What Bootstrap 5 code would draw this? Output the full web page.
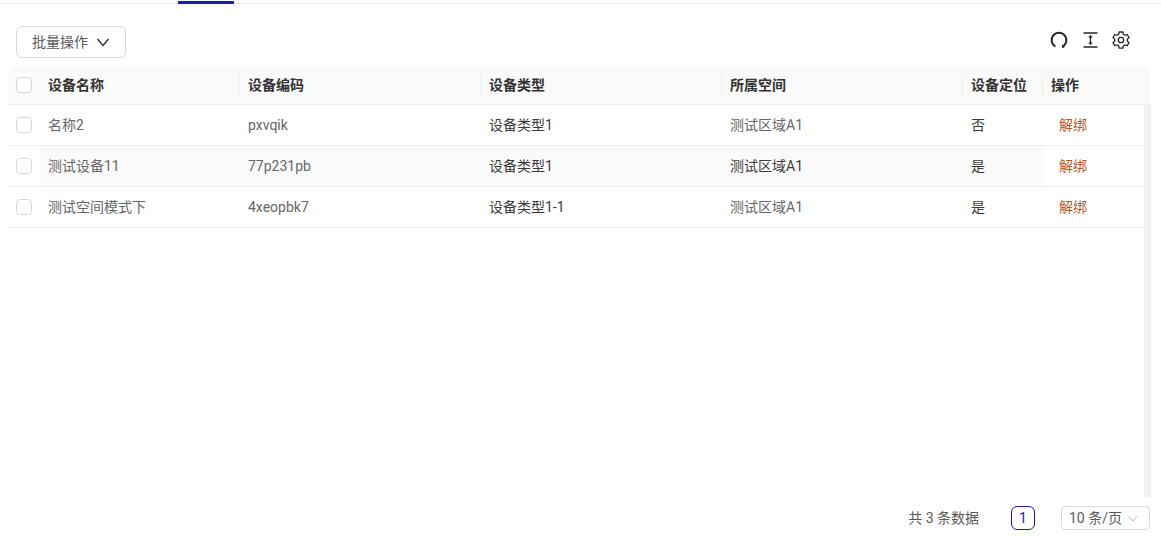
<!DOCTYPE html>
<html lang="zh">
<head>
<meta charset="utf-8">
<title>设备</title>
<link href="https://cdn.jsdelivr.net/npm/bootstrap@5.3.0/dist/css/bootstrap.min.css" rel="stylesheet">
<style>
html,body{height:547px;overflow:hidden;background:#fff}
body{font-family:"Roboto","Noto Sans CJK SC",sans-serif;font-size:14px;color:#595959;padding-top:3px}
.tabline{height:1px;background:#eee;position:relative}
.tabmark{position:absolute;left:178px;top:-2px;width:56px;height:3px;background:#1a1ab8}
.toolbar{height:62px;padding:22px 20px 0 16px}
.bulkbtn{width:110px;height:32px;border:1px solid #d9d9d9;border-radius:6px;background:#fff;color:#595959;font-size:14px;padding:0;gap:8px}
.toolic{gap:11px;margin:4px 10px 0 0}
.tablewrap{margin:0 11px 0 8px;height:431px;position:relative}
.devtable{table-layout:fixed;width:1142px;border-collapse:separate;border-spacing:0;margin:0}
.devtable th,.devtable td{padding:0 0 0 8px;vertical-align:middle;border-bottom:1px solid #eee;font-size:14px;background:transparent;box-shadow:none;white-space:nowrap}
.devtable thead th{height:39px;background:#fafafa;color:#333;font-weight:600;position:relative}
.devtable thead th:first-child{border-top-left-radius:8px}
.devtable thead th:last-child{border-top-right-radius:8px}
.devtable thead th+th+th::before{content:"";position:absolute;left:-1px;top:8px;height:22px;width:1px;background:#f0f0f0}
.devtable tbody td{height:41px;color:#666}
.devtable tbody td.dark{color:#3a3a3a}
.devtable tbody tr.zebra td{background:#fafafa}
.devtable tbody tr.zebra td.plain{background:#fff}
.boxy{display:block;width:16px;height:16px;border:1px solid #d9d9d9;border-radius:4px;background:#fff}
.unbind{color:#c0561f;padding-left:8px;display:inline-block}
.scrolltrack{position:absolute;right:-1px;top:38px;width:7px;height:393px;background:#f2f2f2}
.pager{height:40px;padding:2px 11px 0 0;color:#595959;font-size:14px}
.pagenum{width:24px;height:24px;border:1px solid #1a1ab8;border-radius:6px;color:#1a1ab8;margin:0 26px 0 32px;font-size:14px}
.pagesize{width:89px;height:24px;border:1px solid #d9d9d9;border-radius:4px;padding:0 10px 0 7px;color:#595959}
</style>
</head>
<body>
<div class="tabline"><div class="tabmark"></div></div>
<div class="toolbar d-flex justify-content-between align-items-start">
  <button type="button" class="bulkbtn d-flex align-items-center justify-content-center">批量操作
    <svg width="14" height="14" viewBox="0 0 14 14" fill="none" stroke="#262626" stroke-width="1.3"><path d="M1.500 4l5.500 6.500L12.500 4"/></svg>
  </button>
  <div class="toolic d-flex align-items-center">
    <svg width="20" height="20" viewBox="0 0 20 20" fill="none" stroke="#262626" stroke-width="2"><path d="M6.400 16.600A7.400 7.400 0 1 1 13.600 16.600"/><path d="M13.600 15v2.200h1.800" stroke-width="1.300"/></svg>
    <svg width="20" height="20" viewBox="0 0 20 20" fill="none" stroke="#262626" stroke-width="1.500"><path d="M3.500 3h14M3.500 17h14"/><path d="M10.500 6v8M8.900 7.400l1.600-1.600 1.600 1.600M8.900 12.600l1.600 1.600 1.600-1.600" stroke-width="1.300"/></svg>
    <svg width="20" height="20" viewBox="0 0 20 20" fill="none" stroke="#262626" stroke-width="1.300"><path d="M8.200 2h3.600l.5 2.300 1.600.9 2.300-.7 1.800 3.100-1.700 1.600v1.800l1.700 1.600-1.800 3.100-2.300-.7-1.600.9-.5 2.300H8.200l-.5-2.300-1.600-.9-2.300.7-1.800-3.100 1.700-1.600V9.200L2 7.600l1.800-3.100 2.300.7 1.600-.9z" stroke-linejoin="round"/><circle cx="10" cy="10" r="2.700"/></svg>
  </div>
</div>
<div class="tablewrap">
  <table class="table devtable">
    <colgroup><col style="width:32px"><col style="width:200px"><col style="width:241px"><col style="width:241px"><col style="width:241px"><col style="width:80px"><col style="width:107px"></colgroup>
    <thead><tr><th><span class="boxy"></span></th><th>设备名称</th><th>设备编码</th><th>设备类型</th><th>所属空间</th><th>设备定位</th><th>操作</th></tr></thead>
    <tbody>
      <tr><td><span class="boxy"></span></td><td>名称2</td><td>pxvqik</td><td class="dark">设备类型1</td><td>测试区域A1</td><td class="dark">否</td><td><span class="unbind">解绑</span></td></tr>
      <tr class="zebra"><td class="plain"><span class="boxy"></span></td><td>测试设备11</td><td>77p231pb</td><td class="dark">设备类型1</td><td class="dark">测试区域A1</td><td class="dark">是</td><td class="plain"><span class="unbind">解绑</span></td></tr>
      <tr><td><span class="boxy"></span></td><td>测试空间模式下</td><td>4xeopbk7</td><td class="dark">设备类型1-1</td><td>测试区域A1</td><td class="dark">是</td><td><span class="unbind">解绑</span></td></tr>
    </tbody>
  </table>
  <div class="scrolltrack"></div>
</div>
<div class="pager d-flex justify-content-end align-items-center">
  <span>共 3 条数据</span>
  <span class="pagenum d-flex align-items-center justify-content-center">1</span>
  <span class="pagesize d-flex align-items-center justify-content-between">10 条/页
    <svg width="12" height="12" viewBox="0 0 12 12" fill="none" stroke="#bfbfbf" stroke-width="1"><path d="M1 3.500l5 5.500 5-5.500"/></svg>
  </span>
</div>
<script src="https://cdn.jsdelivr.net/npm/bootstrap@5.3.0/dist/js/bootstrap.bundle.min.js"></script>
</body>
</html>
